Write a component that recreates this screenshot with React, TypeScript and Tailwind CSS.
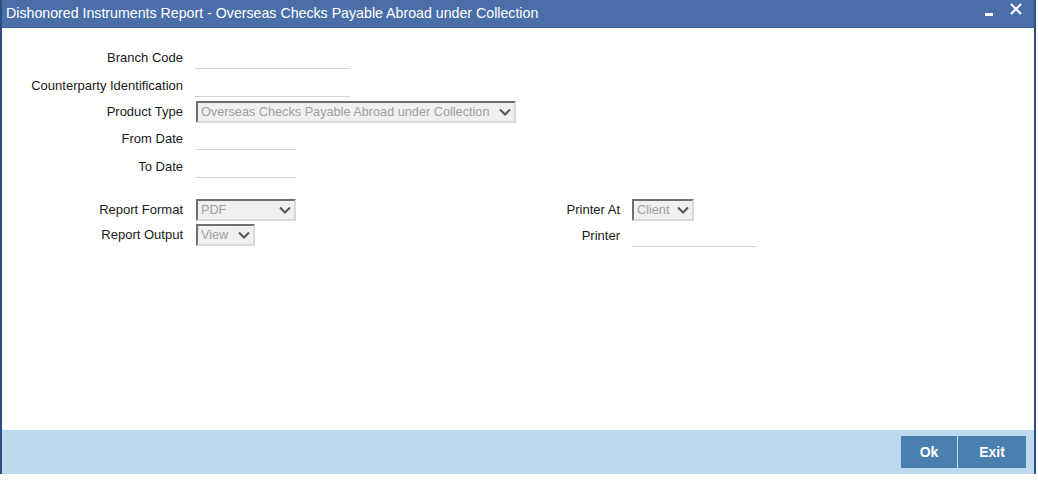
import React from "react";

const Chevron: React.FC = () => (
  <svg width="12" height="9" viewBox="0 0 12 9" className="shrink-0">
    <path d="M1 1.5 L6 6.5 L11 1.5" fill="none" stroke="#555" strokeWidth="2" />
  </svg>
);

const Select: React.FC<{ value: string; width: string }> = ({ value, width }) => (
  <div
    className={`${width} h-[22px] flex items-center justify-between gap-[2px] pl-[3px] pr-[3px] bg-[#f0f0f0] border-2 border-t-[#6f6f6f] border-l-[#6f6f6f] border-r-[#d8d8d8] border-b-[#d8d8d8] text-[#a0a0a0] text-[12.7px] leading-[16px]`}
  >
    <span className="whitespace-nowrap">{value}</span>
    <Chevron />
  </div>
);

const Line: React.FC<{ width: string }> = ({ width }) => (
  <div className={`${width} h-[23px] border-b border-[#d4d4d4]`} />
);

const Row: React.FC<{ label: string; children: React.ReactNode; labelW?: string }> = ({
  label,
  children,
  labelW = "w-[181px]",
}) => (
  <div className="flex items-end">
    <div className={`${labelW} text-right h-[22px] flex items-center justify-end`}>{label}</div>
    <div className="ml-[12px]">{children}</div>
  </div>
);

const App: React.FC = () => {
  return (
    <div
      className="w-[1038px] h-[483px] bg-white text-[13px] text-[#1a1a1a] overflow-hidden"
      style={{ fontFamily: '"Liberation Sans", Arial, sans-serif' }}
    >
      <div className="w-[1036px] h-[474px] flex flex-col border-l-2 border-r-2 border-[#2d4f80]">
        {/* Barra de titulo */}
        <div className="h-[28px] bg-[#4a6fa8] border-b border-[#3b5f94] flex items-center justify-between pl-[4px] pr-[12px] text-white">
          <span className="text-[14.2px]">
            Dishonored Instruments Report - Overseas Checks Payable Abroad under Collection
          </span>
          <div className="flex items-center gap-[17px]">
            <div className="w-[8px] h-[3px] bg-white mt-[1px]" />
            <svg width="12" height="12" viewBox="0 0 12 12" className="-mt-[9px]">
              <path d="M1 1 L11 11 M11 1 L1 11" stroke="#fff" strokeWidth="2.2" />
            </svg>
          </div>
        </div>

        {/* Formulario */}
        <div className="flex-1 pt-[18px]">
          <div className="flex flex-col">
            <Row label="Branch Code">
              <Line width="w-[155px]" />
            </Row>
            <div className="h-[5px]" />
            <Row label="Counterparty Identification">
              <Line width="w-[155px]" />
            </Row>
            <div className="h-[4px]" />
            <Row label="Product Type">
              <div className="ml-[1px]">
                <Select value="Overseas Checks Payable Abroad under Collection" width="w-[320px]" />
              </div>
            </Row>
            <div className="h-[4px]" />
            <Row label="From Date">
              <Line width="w-[101px]" />
            </Row>
            <div className="h-[5px]" />
            <Row label="To Date">
              <Line width="w-[101px]" />
            </Row>
          </div>

          <div className="flex mt-[21px]">
            <div className="flex flex-col gap-[3px]">
              <Row label="Report Format">
                <div className="ml-[1px]">
                  <Select value="PDF" width="w-[100px]" />
                </div>
              </Row>
              <Row label="Report Output">
                <div className="ml-[1px]">
                  <Select value="View" width="w-[59px]" />
                </div>
              </Row>
            </div>
            <div className="flex flex-col gap-[3px] ml-[124px]">
              <Row label="Printer At" labelW="w-[200px]">
                <Select value="Client" width="w-[62px]" />
              </Row>
              <Row label="Printer" labelW="w-[200px]">
                <Line width="w-[125px]" />
              </Row>
            </div>
          </div>
        </div>

        {/* Pie */}
        <div className="h-[44px] bg-[#bdd9ed] flex items-center justify-end pr-[8px]">
          <div className="flex">
            <button className="w-[57px] h-[32px] bg-[#4a80b0] text-white font-bold text-[14px] border-r border-[#bdd9ed]">
              Ok
            </button>
            <button className="w-[68px] h-[32px] bg-[#4a80b0] text-white font-bold text-[14px]">
              Exit
            </button>
          </div>
        </div>
      </div>
    </div>
  );
};

export default App;
